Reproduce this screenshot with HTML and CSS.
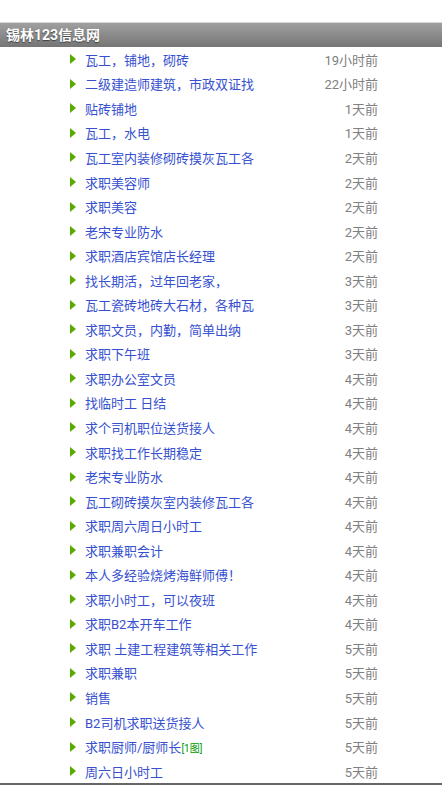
FILE: index.html
```html
<!DOCTYPE html>
<html lang="zh-CN">
<head>
    <meta charset="UTF-8">
    <meta name="viewport" content="width=device-width, initial-scale=1.0">
    <title>锡林123信息网</title>
    <link rel="stylesheet" href="styles.css">
</head>
<body>
    <div class="page">
        <div class="header">锡林123信息网</div>

        <ul class="list">
            <li><a href="#">瓦工，铺地，砌砖</a><span class="time">19小时前</span></li>
            <li><a href="#">二级建造师建筑，市政双证找</a><span class="time">22小时前</span></li>
            <li><a href="#">贴砖铺地</a><span class="time">1天前</span></li>
            <li><a href="#">瓦工，水电</a><span class="time">1天前</span></li>
            <li><a href="#">瓦工室内装修砌砖摸灰瓦工各</a><span class="time">2天前</span></li>
            <li><a href="#">求职美容师</a><span class="time">2天前</span></li>
            <li><a href="#">求职美容</a><span class="time">2天前</span></li>
            <li><a href="#">老宋专业防水</a><span class="time">2天前</span></li>
            <li><a href="#">求职酒店宾馆店长经理</a><span class="time">2天前</span></li>
            <li><a href="#">找长期活，过年回老家，</a><span class="time">3天前</span></li>
            <li><a href="#">瓦工瓷砖地砖大石材，各种瓦</a><span class="time">3天前</span></li>
            <li><a href="#">求职文员，内勤，简单出纳</a><span class="time">3天前</span></li>
            <li><a href="#">求职下午班</a><span class="time">3天前</span></li>
            <li><a href="#">求职办公室文员</a><span class="time">4天前</span></li>
            <li><a href="#">找临时工 日结</a><span class="time">4天前</span></li>
            <li><a href="#">求个司机职位送货接人</a><span class="time">4天前</span></li>
            <li><a href="#">求职找工作长期稳定</a><span class="time">4天前</span></li>
            <li><a href="#">老宋专业防水</a><span class="time">4天前</span></li>
            <li><a href="#">瓦工砌砖摸灰室内装修瓦工各</a><span class="time">4天前</span></li>
            <li><a href="#">求职周六周日小时工</a><span class="time">4天前</span></li>
            <li><a href="#">求职兼职会计</a><span class="time">4天前</span></li>
            <li><a href="#">本人多经验烧烤海鲜师傅！</a><span class="time">4天前</span></li>
            <li><a href="#">求职小时工，可以夜班</a><span class="time">4天前</span></li>
            <li><a href="#">求职B2本开车工作</a><span class="time">4天前</span></li>
            <li><a href="#">求职 土建工程建筑等相关工作</a><span class="time">5天前</span></li>
            <li><a href="#">求职兼职</a><span class="time">5天前</span></li>
            <li><a href="#">销售</a><span class="time">5天前</span></li>
            <li><a href="#">B2司机求职送货接人</a><span class="time">5天前</span></li>
            <li><a href="#">求职厨师/厨师长<span class="pic">[1图]</span></a><span class="time">5天前</span></li>
            <li><a href="#">周六日小时工</a><span class="time">5天前</span></li>
        </ul>
    </div>
</body>
</html>
```

FILE: styles.css
```css
body {
    margin: 0;
    background-color: #fff;
    font-family: Roboto, "Noto Sans CJK SC", sans-serif;
}

.page {
    padding-top: 22px;
}

.header {
    height: 24px;
    line-height: 24px;
    border-top: 1px solid #d8d8d8;
    background: linear-gradient(#a0a0a0, #757575);
    color: #fff;
    font-size: 14px;
    font-weight: bold;
    padding-left: 6px;
    text-shadow: 0 1px 1px rgba(0, 0, 0, 0.5);
}

.list {
    list-style: none;
    margin: 0;
    padding: 0 64px 0 70px;
    border-bottom: 2px solid #666;
}

.list li {
    display: flex;
    align-items: center;
    height: 24.55px;
    font-size: 13px;
}

/* green arrow bullet */
.list li::before {
    content: "";
    width: 0;
    height: 0;
    border-top: 5px solid transparent;
    border-bottom: 5px solid transparent;
    border-left: 6px solid #5aaa00;
    margin-right: 9px;
}

.list a {
    color: #3650d0;
    text-decoration: none;
    flex: 1;
    white-space: nowrap;
}

.pic {
    color: #009900;
    font-size: 10px;
}

.time {
    color: #808080;
}
```
